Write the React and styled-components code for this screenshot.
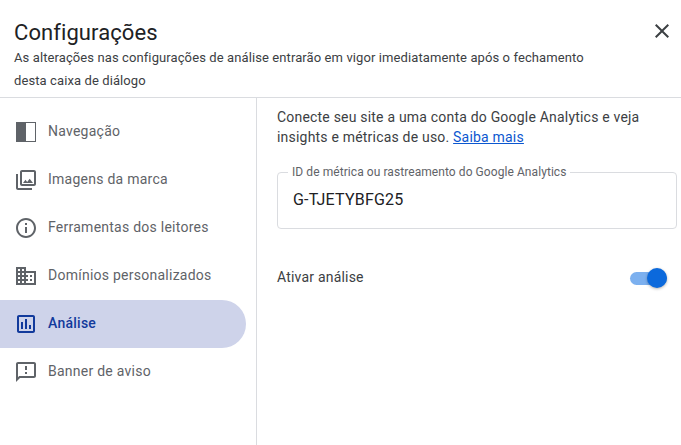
import React from 'react'
import styled, { createGlobalStyle } from 'styled-components'

const GlobalStyle = createGlobalStyle`
html, body {
  margin: 0;
  background: #fff;
  font-family: Roboto, "Liberation Sans", sans-serif;
}
* { box-sizing: border-box; }
`

const icons = {
  nav: 'M2 2h20v20H2V2zm10 1v18h9V3h-9z',
  image: 'M20 4v12H8V4h12m0-2H8c-1.1 0-2 .9-2 2v12c0 1.1.9 2 2 2h12c1.1 0 2-.9 2-2V4c0-1.1-.9-2-2-2zm-8.5 9.67l1.69 2.26 2.48-3.1L19 15H9zM2 6v14c0 1.1.9 2 2 2h14v-2H4V6H2z',
  info: 'M11 7h2v2h-2zm0 4h2v6h-2zm1-9C6.48 2 2 6.48 2 12s4.48 10 10 10 10-4.48 10-10S17.52 2 12 2zm0 18c-4.41 0-8-3.59-8-8s3.59-8 8-8 8 3.59 8 8-3.59 8-8 8z',
  domain: 'M12 7V3H2v18h20V7H12zM6 19H4v-2h2v2zm0-4H4v-2h2v2zm0-4H4V9h2v2zm0-4H4V5h2v2zm4 12H8v-2h2v2zm0-4H8v-2h2v2zm0-4H8V9h2v2zm0-4H8V5h2v2zm10 12h-8v-2h2v-2h-2v-2h2v-2h-2V9h8v10zm-2-8h-2v2h2v-2zm0 4h-2v2h2v-2z',
  poll: 'M19 3H5c-1.1 0-2 .9-2 2v14c0 1.1.9 2 2 2h14c1.1 0 2-.9 2-2V5c0-1.1-.9-2-2-2zm0 16H5V5h14v14zM7 10h2v7H7zm4-3h2v10h-2zm4 6h2v4h-2z',
  banner: 'M20 2H4c-1.1 0-1.99.9-1.99 2L2 22l4-4h14c1.1 0 2-.9 2-2V4c0-1.1-.9-2-2-2zm0 14H5.17L4 17.17V4h16v12zM11 12h2v2h-2zm0-6h2v4h-2z',
  close: 'M19 6.41L17.59 5 12 10.59 6.41 5 5 6.41 10.59 12 5 17.59 6.41 19 12 13.41 17.59 19 19 17.59 13.41 12z',
}

const navItems = [
  { icon: 'nav', label: 'Navegação' },
  { icon: 'image', label: 'Imagens da marca' },
  { icon: 'info', label: 'Ferramentas dos leitores' },
  { icon: 'domain', label: 'Domínios personalizados' },
  { icon: 'poll', label: 'Análise', active: true },
  { icon: 'banner', label: 'Banner de aviso' },
]

const Icon = ({ name, className }) => (
  <svg className={className} viewBox="0 0 24 24" width="24" height="24" fill="currentColor">
    <path d={icons[name]} fillRule={name === 'nav' ? 'evenodd' : undefined} />
  </svg>
)

const App = () => {
  return (
    <Dialog>
      <GlobalStyle />
      <Header>
        <HeaderText>
          <Title>Configurações</Title>
          <Subtitle>
            As alterações nas configurações de análise entrarão em vigor imediatamente após o fechamento
            desta caixa de diálogo
          </Subtitle>
        </HeaderText>
        <CloseButton aria-label="Fechar"><Icon name="close" /></CloseButton>
      </Header>
      <Body>
        <Sidebar>
          {navItems.map(item => (
            <NavItem key={item.label} $active={item.active}>
              <Icon name={item.icon} />
              <NavLabel>{item.label}</NavLabel>
            </NavItem>
          ))}
        </Sidebar>
        <Content>
          <Intro>
            Conecte seu site a uma conta do Google Analytics e veja insights e métricas de uso.{' '}
            <MoreLink href="#">Saiba mais</MoreLink>
          </Intro>
          <Field>
            <FieldLabel>ID de métrica ou rastreamento do Google Analytics</FieldLabel>
            <FieldValue>G-TJETYBFG25</FieldValue>
          </Field>
          <ToggleRow>
            <span>Ativar análise</span>
            <Toggle><Thumb /></Toggle>
          </ToggleRow>
        </Content>
      </Body>
    </Dialog>
  )
}

export default App

const Dialog = styled.div`
width: 681px;
height: 445px;
overflow: hidden;
display: flex;
flex-direction: column;
background: #fff;
`

const Header = styled.header`
height: 98px;
flex: none;
display: flex;
justify-content: space-between;
padding: 19px 7px 0 14px;
border-bottom: 1px solid #dadce0;
`

const HeaderText = styled.div`
width: 590px;
`

const Title = styled.h1`
margin: 0;
font-size: 22px;
font-weight: 400;
line-height: 27px;
letter-spacing: 0.08px;
color: #202124;
`

const Subtitle = styled.p`
margin: 0;
font-size: 13px;
line-height: 23px;
letter-spacing: 0.1px;
color: #3c4043;
`

const CloseButton = styled.button`
width: 24px;
height: 24px;
padding: 0;
border: 0;
background: none;
color: #3c4043;
`

const Body = styled.div`
flex: 1;
display: flex;
`

const Sidebar = styled.nav`
width: 257px;
flex: none;
padding-top: 10px;
border-right: 1px solid #dadce0;
`

const NavItem = styled.div`
width: 246px;
height: 48px;
display: flex;
align-items: center;
gap: 10px;
padding-left: 14px;
border-radius: 0 24px 24px 0;
font-size: 14px;
letter-spacing: 0.25px;
font-weight: ${({ $active }) => ($active ? 500 : 400)};
color: ${({ $active }) => ($active ? '#123a9c' : '#5f6368')};
background: ${({ $active }) => ($active ? '#ced3ea' : 'transparent')};
`

const NavLabel = styled.span`
margin-top: -2px;
`

const Content = styled.main`
flex: 1;
padding: 9px 4px 0 20px;
`

const Intro = styled.p`
margin: 0;
font-size: 14px;
line-height: 20px;
letter-spacing: 0.2px;
color: #3c4043;
`

const MoreLink = styled.a`
color: #0b57d0;
`

const Field = styled.fieldset`
height: 64px;
margin: 18px 0 0;
padding: 0 10px;
border: 1px solid #dadce0;
border-radius: 4px;
`

const FieldLabel = styled.legend`
padding: 0 4px;
font-size: 12px;
line-height: 14px;
letter-spacing: 0.07px;
color: #5f6368;
`

const FieldValue = styled.div`
margin: 9px 0 0 5px;
font-size: 16px;
line-height: 24px;
letter-spacing: 0.2px;
color: #202124;
`

const ToggleRow = styled.div`
display: flex;
align-items: center;
justify-content: space-between;
height: 24px;
margin-top: 36px;
padding-right: 10px;
font-size: 14px;
letter-spacing: 0.2px;
color: #3c4043;
`

const Toggle = styled.div`
position: relative;
width: 37px;
height: 13px;
margin-top: 2px;
border-radius: 7px;
background: #7cb0ef;
`

const Thumb = styled.div`
position: absolute;
right: 0;
top: -4px;
width: 20px;
height: 20px;
border-radius: 50%;
background: #0b69dc;
box-shadow: 0 1px 3px rgba(0, 0, 0, 0.3);
`
